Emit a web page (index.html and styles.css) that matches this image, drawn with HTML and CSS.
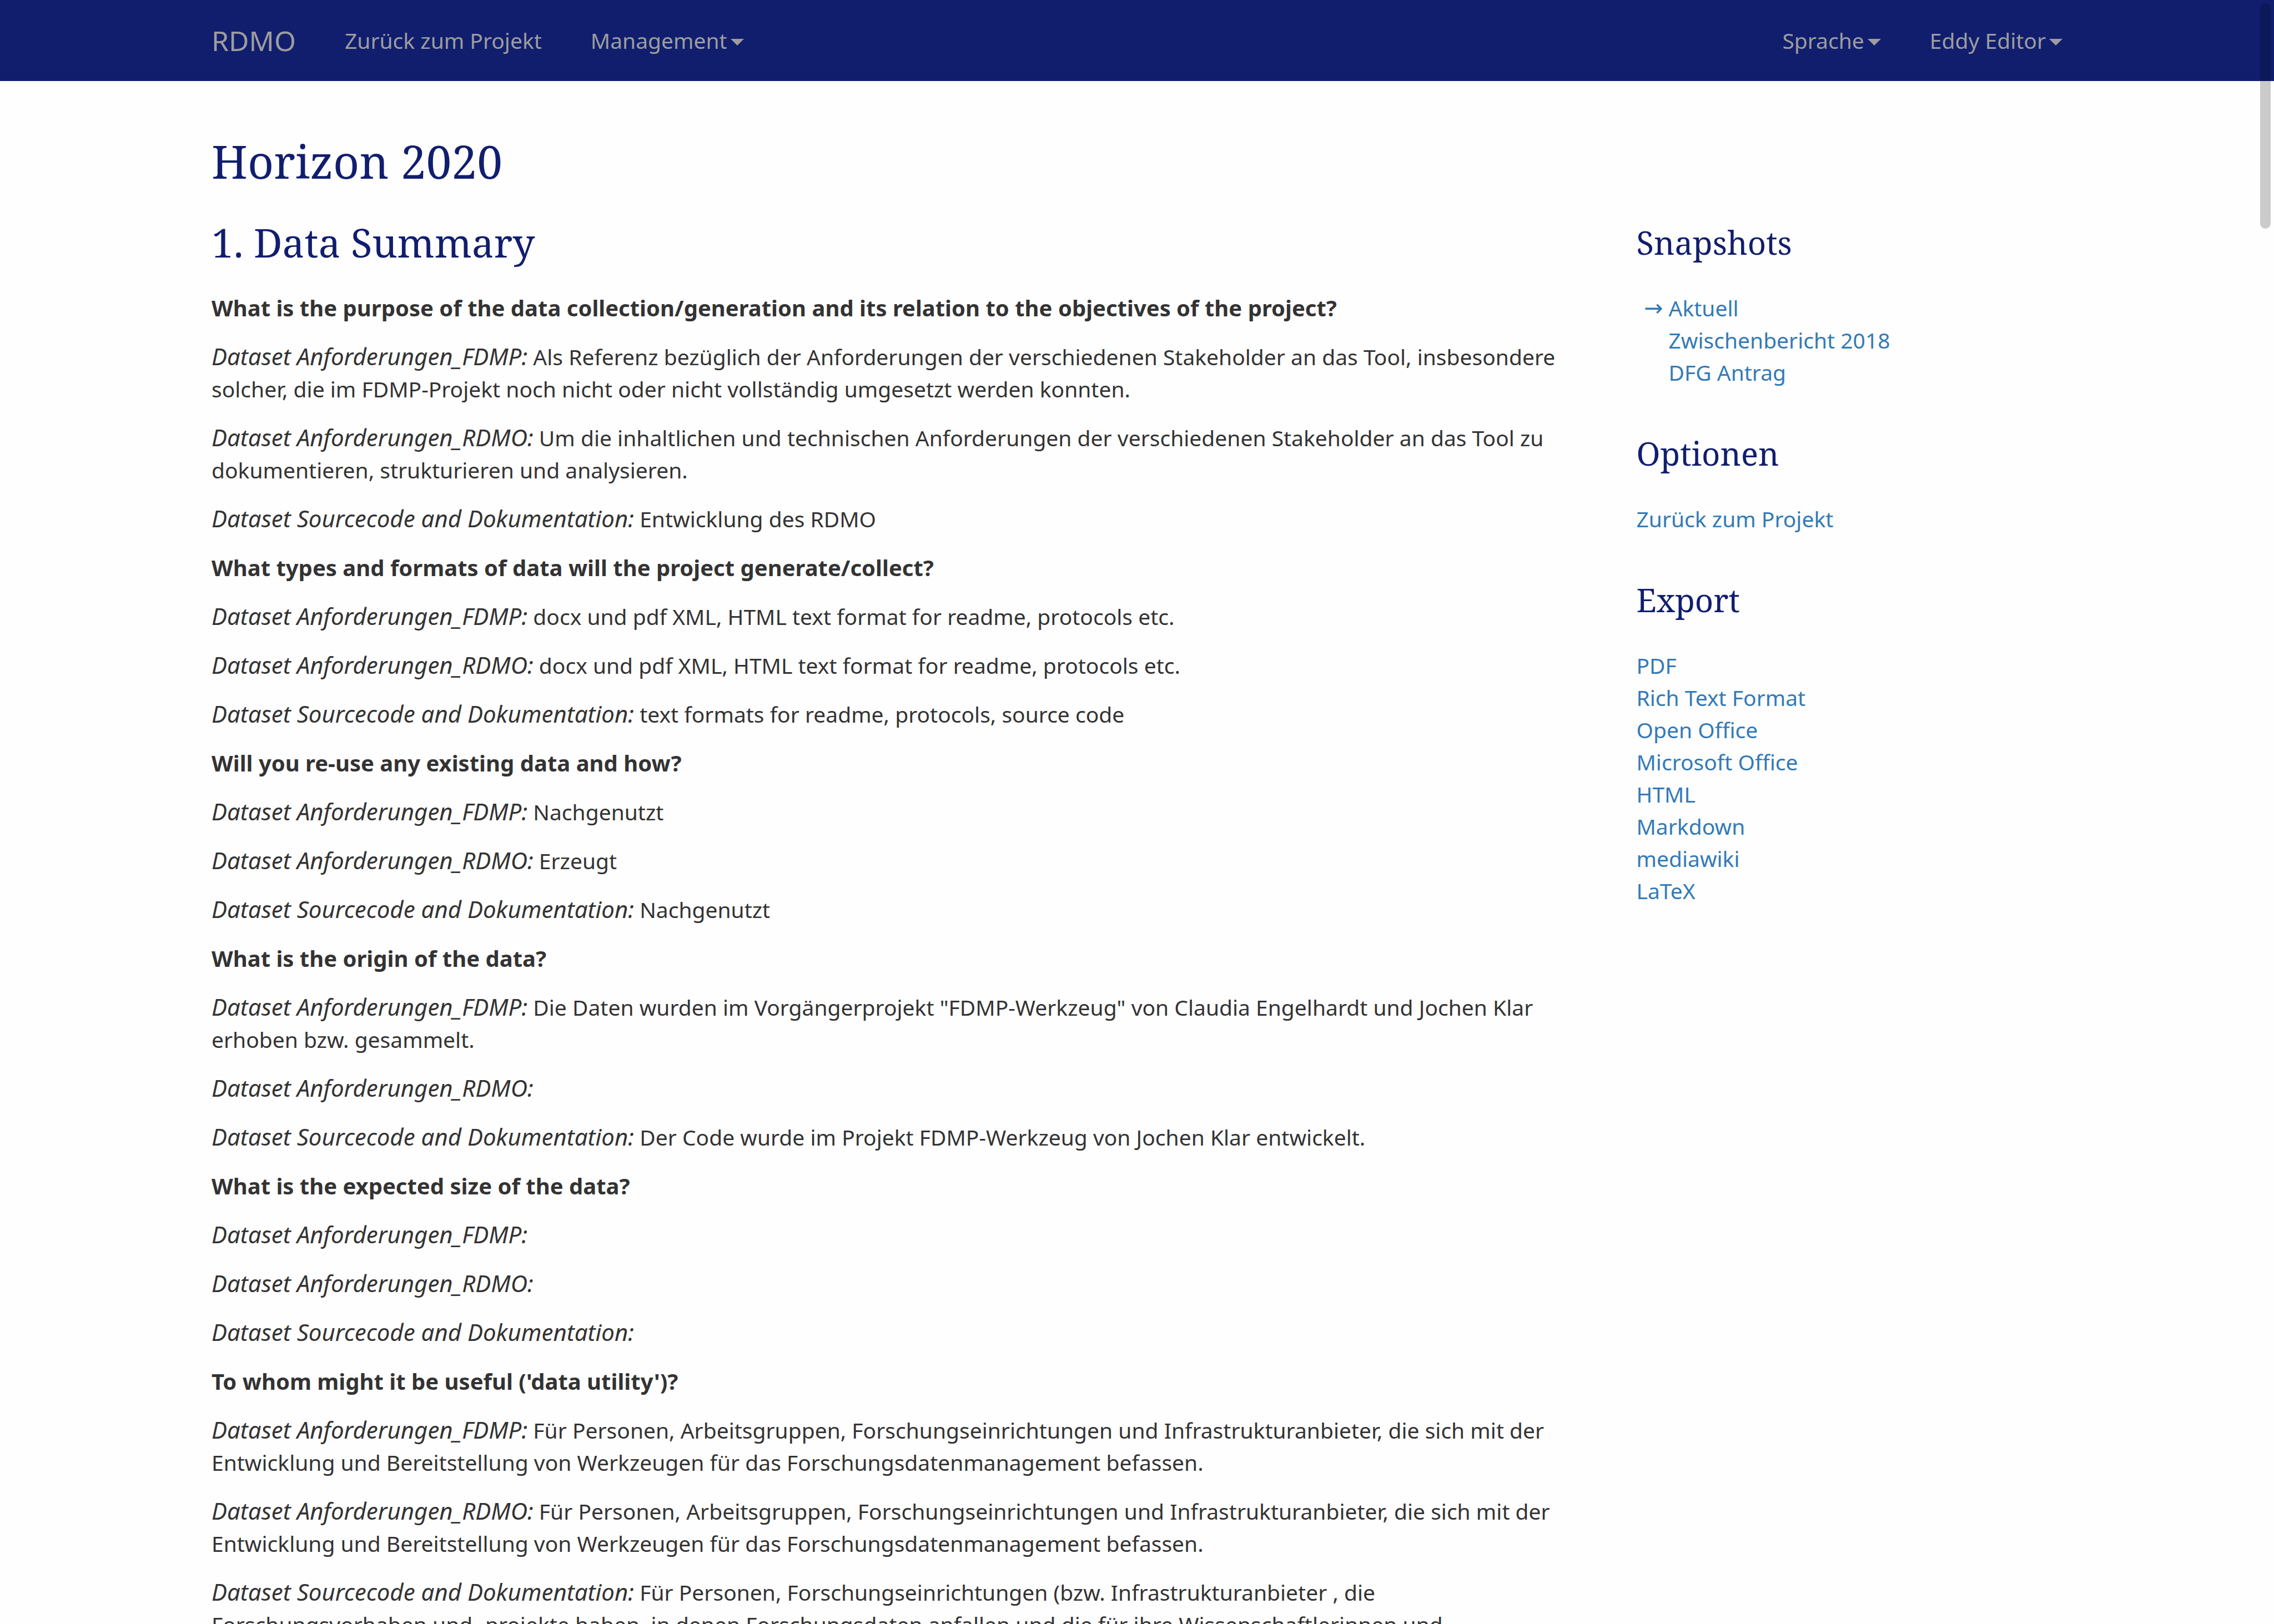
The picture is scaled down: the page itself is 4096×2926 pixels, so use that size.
FILE: index.html
```html
<!DOCTYPE html>
<html lang="de">
<head>
<meta charset="utf-8">
<meta name="viewport" content="width=device-width, initial-scale=1">
<title>RDMO – Horizon 2020</title>
<link rel="stylesheet" href="styles.css">
</head>
<body>
<header class="navbar">
  <nav class="container navbar-inner">
    <a class="brand" href="#">RDMO</a>
    <a class="nav-link" href="#">Zurück zum Projekt</a>
    <button class="nav-link" type="button">Management<span class="caret"></span></button>
    <button class="nav-link nav-right" type="button">Sprache<span class="caret"></span></button>
    <button class="nav-link" type="button">Eddy Editor<span class="caret"></span></button>
  </nav>
</header>

<div class="container page">
  <h1>Horizon 2020</h1>
  <div class="columns">
    <main>
      <h2>1. Data Summary</h2>

      <p><strong>What is the purpose of the data collection/generation and its relation to the objectives of the project?</strong></p>
      <p><em>Dataset Anforderungen_FDMP:</em> Als Referenz bezüglich der Anforderungen der verschiedenen Stakeholder an das Tool, insbesondere solcher, die im FDMP-Projekt noch nicht oder nicht vollständig umgesetzt werden konnten.</p>
      <p><em>Dataset Anforderungen_RDMO:</em> Um die inhaltlichen und technischen Anforderungen der verschiedenen Stakeholder an das Tool zu dokumentieren, strukturieren und analysieren.</p>
      <p><em>Dataset Sourcecode and Dokumentation:</em> Entwicklung des RDMO</p>

      <p><strong>What types and formats of data will the project generate/collect?</strong></p>
      <p><em>Dataset Anforderungen_FDMP:</em> docx und pdf XML, HTML text format for readme, protocols etc.</p>
      <p><em>Dataset Anforderungen_RDMO:</em> docx und pdf XML, HTML text format for readme, protocols etc.</p>
      <p><em>Dataset Sourcecode and Dokumentation:</em> text formats for readme, protocols, source code</p>

      <p><strong>Will you re-use any existing data and how?</strong></p>
      <p><em>Dataset Anforderungen_FDMP:</em> Nachgenutzt</p>
      <p><em>Dataset Anforderungen_RDMO:</em> Erzeugt</p>
      <p><em>Dataset Sourcecode and Dokumentation:</em> Nachgenutzt</p>

      <p><strong>What is the origin of the data?</strong></p>
      <p><em>Dataset Anforderungen_FDMP:</em> Die Daten wurden im Vorgängerprojekt "FDMP-Werkzeug" von Claudia Engelhardt und Jochen Klar erhoben bzw. gesammelt.</p>
      <p><em>Dataset Anforderungen_RDMO:</em></p>
      <p><em>Dataset Sourcecode and Dokumentation:</em> Der Code wurde im Projekt FDMP-Werkzeug von Jochen Klar entwickelt.</p>

      <p><strong>What is the expected size of the data?</strong></p>
      <p><em>Dataset Anforderungen_FDMP:</em></p>
      <p><em>Dataset Anforderungen_RDMO:</em></p>
      <p><em>Dataset Sourcecode and Dokumentation:</em></p>

      <p><strong>To whom might it be useful ('data utility')?</strong></p>
      <p><em>Dataset Anforderungen_FDMP:</em> Für Personen, Arbeitsgruppen, Forschungseinrichtungen und Infrastrukturanbieter, die sich mit der Entwicklung und Bereitstellung von Werkzeugen für das Forschungsdatenmanagement befassen.</p>
      <p><em>Dataset Anforderungen_RDMO:</em> Für Personen, Arbeitsgruppen, Forschungseinrichtungen und Infrastrukturanbieter, die sich mit der Entwicklung und Bereitstellung von Werkzeugen für das Forschungsdatenmanagement befassen.</p>
      <p><em>Dataset Sourcecode and Dokumentation:</em> Für Personen, Forschungseinrichtungen (bzw. Infrastrukturanbieter , die Forschungsvorhaben und -projekte haben, in denen Forschungsdaten anfallen und die für ihre Wissenschaftlerinnen und</p>
    </main>

    <aside>
      <section>
        <h3>Snapshots</h3>
        <ul class="snapshots">
          <li><a href="#"><span class="marker">→</span>Aktuell</a></li>
          <li><a href="#"><span class="marker"></span>Zwischenbericht 2018</a></li>
          <li><a href="#"><span class="marker"></span>DFG Antrag</a></li>
        </ul>
      </section>
      <section>
        <h3>Optionen</h3>
        <ul>
          <li><a href="#">Zurück zum Projekt</a></li>
        </ul>
      </section>
      <section>
        <h3>Export</h3>
        <ul>
          <li><a href="#">PDF</a></li>
          <li><a href="#">Rich Text Format</a></li>
          <li><a href="#">Open Office</a></li>
          <li><a href="#">Microsoft Office</a></li>
          <li><a href="#">HTML</a></li>
          <li><a href="#">Markdown</a></li>
          <li><a href="#">mediawiki</a></li>
          <li><a href="#">LaTeX</a></li>
        </ul>
      </section>
    </aside>
  </div>
</div>
<div class="scroll-thumb"></div>
</body>
</html>
```
FILE: styles.css
```css
* {
  box-sizing: border-box;
}

html {
  height: 100%;
  overflow: hidden;
}

body {
  height: 100%;
  margin: 0;
  overflow: hidden;
  background: #fefefe;
  color: #333;
  font-family: "Droid Sans", "Noto Sans", "Open Sans", sans-serif;
  font-size: 39px;
  line-height: 58px;
}

a {
  color: #337ab7;
  text-decoration: none;
}

.container {
  max-width: 3422px;
  margin: 0 auto;
  padding: 0 44px;
}

/* Top bar */

.navbar {
  background: #111e6e;
}

.navbar-inner {
  display: flex;
  align-items: center;
  gap: 88px;
  height: 146px;
}

.brand,
.nav-link {
  color: #9d9d9d;
}

.brand {
  font-size: 50px;
}

.nav-link {
  display: flex;
  align-items: center;
  padding: 0;
  border: 0;
  background: none;
  font-family: inherit;
  font-size: 39px;
  line-height: 58px;
}

.nav-right {
  margin-left: auto;
}

.caret {
  margin: 6px 0 0 6px;
  border-top: 12px solid;
  border-right: 12px solid transparent;
  border-left: 12px solid transparent;
}

/* Content */

.page {
  padding-top: 99px;
}

h1,
h2,
h3 {
  margin: 0;
  color: #111e6e;
  font-family: "Droid Serif", "Noto Serif", serif;
  font-weight: 400;
}

h1 {
  margin-bottom: 63px;
  font-size: 82px;
  line-height: 90px;
}

h2,
h3 {
  margin-bottom: 51px;
  line-height: 77px;
}

h2 {
  font-size: 71px;
}

h3 {
  font-size: 58px;
}

.columns {
  display: grid;
  grid-template-columns: 3fr 1fr;
  margin: 0 -44px;
}

main,
aside {
  min-width: 0;
  padding: 0 44px;
}

p {
  margin: 0 0 30px;
}

strong {
  font-size: 40px;
  line-height: 1;
}

em {
  font-size: 42px;
  line-height: 1;
}

/* Sidebar */

aside section {
  margin-bottom: 78px;
}

ul {
  margin: 0;
  padding: 0;
  list-style: none;
}

.snapshots a {
  display: flex;
}

.marker {
  width: 58px;
  padding-right: 10px;
  font-family: "DejaVu Sans", sans-serif;
  font-size: 41px;
  text-align: right;
}

.scroll-thumb {
  position: fixed;
  top: 6px;
  right: 6px;
  width: 19px;
  height: 406px;
  border-radius: 10px;
  background: rgba(0, 0, 0, 0.2);
}
```
